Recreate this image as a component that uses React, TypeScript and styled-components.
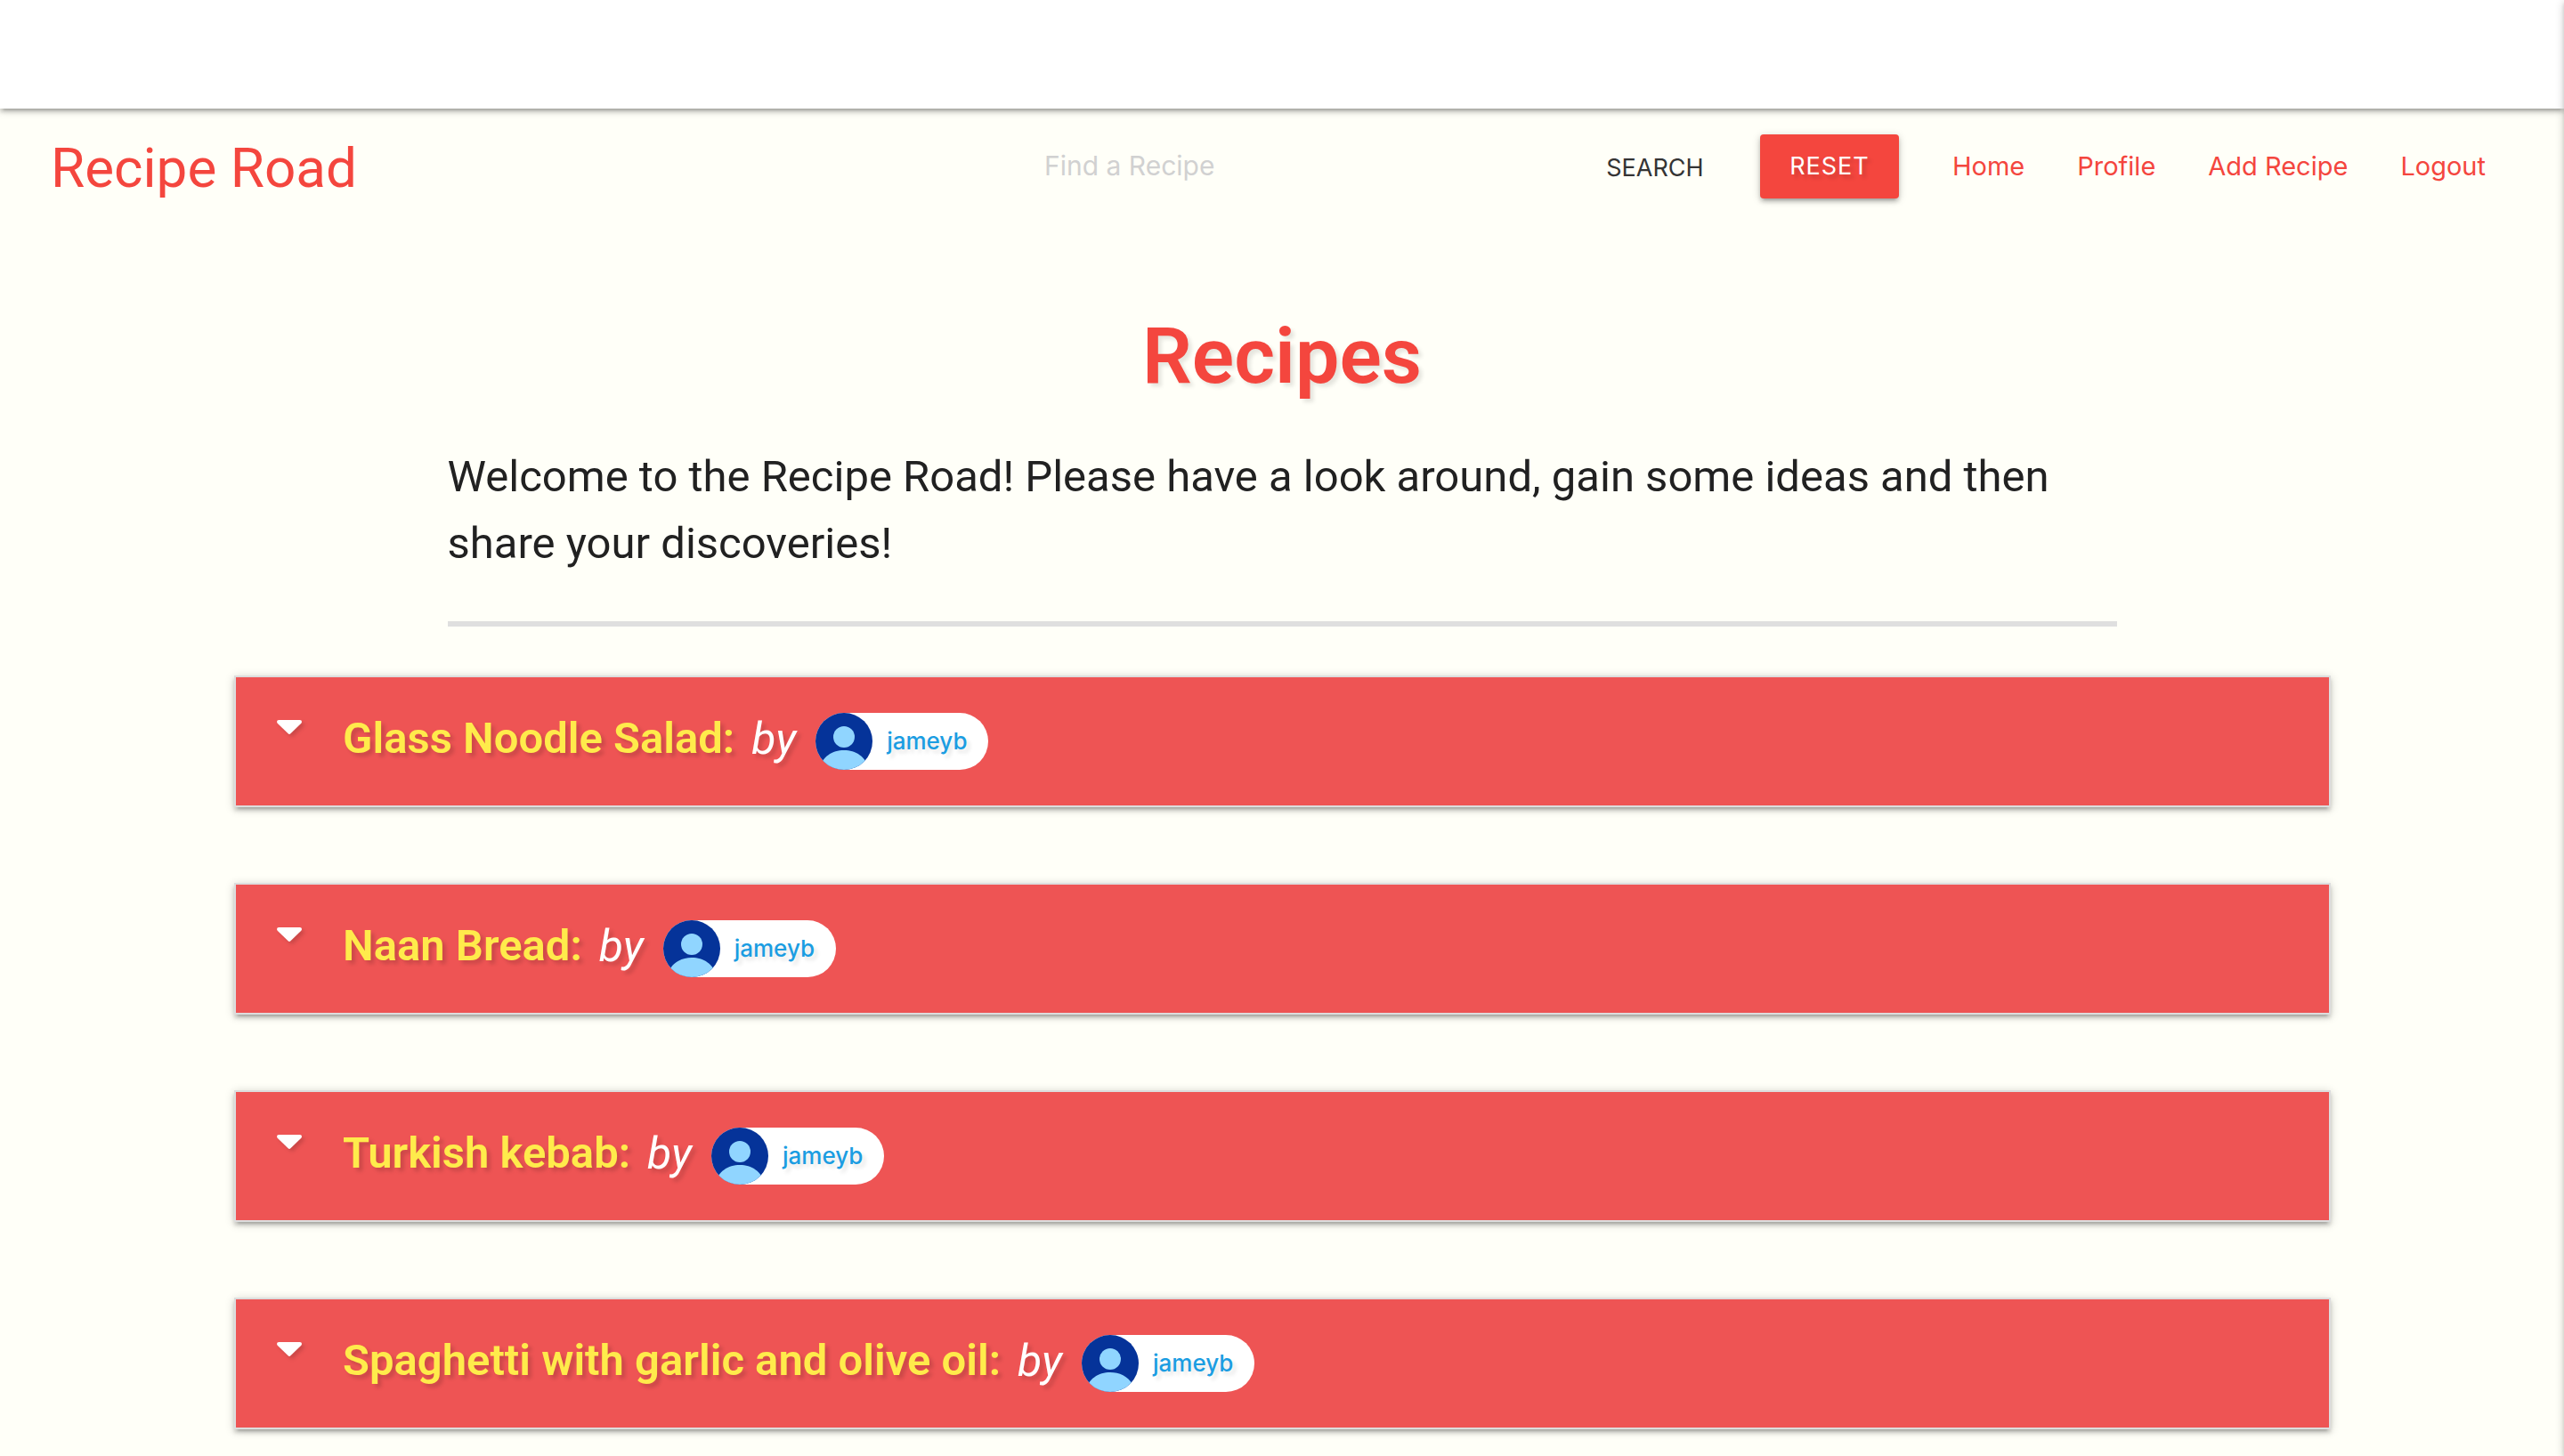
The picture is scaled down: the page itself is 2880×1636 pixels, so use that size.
import React from "react";
import styled, { createGlobalStyle } from "styled-components";

const red = "#f4463e";
const displayFont = 'Roboto, "Liberation Sans", sans-serif';
const depth =
  "0 4px 4px 0 rgba(0,0,0,0.14), 0 6px 2px -4px rgba(0,0,0,0.12), 0 2px 10px 0 rgba(0,0,0,0.2)";

const GlobalStyle = createGlobalStyle`
  *, *::before, *::after { box-sizing: border-box; }
  html { overflow-x: hidden; }
  body {
    margin: 0;
    background: #fffff8;
    color: #212121;
    font-family: Inter, "Liberation Sans", sans-serif;
    font-size: 30px;
    line-height: 44px;
  }
  a { color: inherit; text-decoration: none; }
  h1, h2, p, ul { margin: 0; padding: 0; }
  ul { list-style: none; }
`;

const Page = styled.div`
  overflow: hidden;
  min-height: 100vh;
`;

const TopBar = styled.div`
  height: 122px;
  background: #fff;
  box-shadow: ${depth};
`;

const Drawer = styled.aside`
  position: fixed;
  top: 0;
  bottom: 0;
  left: 100%;
  width: 600px;
  background: #fff;
  box-shadow: ${depth};
`;

const Nav = styled.nav`
  display: flex;
  align-items: center;
  height: 130px;
  padding: 0 88px 0 57px;
`;

const Brand = styled.a`
  padding-top: 4px;
  color: ${red};
  font-family: ${displayFont};
  font-size: 62px;
  line-height: 80px;
`;

const SearchForm = styled.form`
  display: flex;
  align-items: center;
  margin-left: auto;
`;

const SearchInput = styled.input`
  width: 600px;
  height: 60px;
  padding: 0 0 2px;
  border: 0;
  outline: 0;
  background: transparent;
  color: #212121;
  font: inherit;
  &::placeholder {
    color: #d1d1d1;
    opacity: 1;
  }
`;

const FlatButton = styled.button`
  width: 172px;
  height: 72px;
  padding: 4px 0 0;
  border: 0;
  background: transparent;
  color: #343434;
  font: inherit;
  font-size: 27px;
`;

const ResetButton = styled.button`
  width: 156px;
  height: 72px;
  margin: 0 60px 0 32px;
  padding: 0;
  border: 0;
  border-radius: 4px;
  background: ${red};
  color: #fff;
  font: inherit;
  font-size: 27px;
  letter-spacing: 1px;
  text-shadow: 4px 4px 4px rgba(0, 0, 0, 0.15);
  box-shadow: ${depth};
`;

const NavLinks = styled.ul`
  display: flex;
  gap: 59px;
  color: ${red};
  font-size: 29px;
`;

const Intro = styled.header`
  width: 1875px;
  max-width: 90%;
  margin: 0 auto;
  padding-top: 96px;
`;

const Title = styled.h1`
  color: ${red};
  font-family: ${displayFont};
  font-size: 88px;
  line-height: 104px;
  font-weight: 600;
  text-align: center;
  text-shadow: 4px 4px 4px rgba(0, 0, 0, 0.1);
`;

const Welcome = styled.p`
  margin-top: 46px;
  font-family: ${displayFont};
  font-size: 49px;
  line-height: 75px;
`;

const Rule = styled.hr`
  height: 6px;
  margin: 50px 0 55px;
  border: 0;
  background: #dfdfdf;
`;

const RecipeList = styled.ul`
  display: flex;
  flex-direction: column;
  gap: 85px;
  padding: 0 262px 85px 263px;
`;

const RecipeRow = styled.li`
  display: flex;
  align-items: flex-start;
  height: 148px;
  padding: 40px 46px;
  border: 2px solid #ddd;
  background: #ee5454;
  color: #fff;
  box-shadow: ${depth};
  text-shadow: 4px 4px 4px rgba(0, 0, 0, 0.15);
`;

const Toggle = styled.button`
  display: flex;
  width: 28px;
  height: 32px;
  margin-right: 46px;
  padding: 8px 0 0;
  border: 0;
  background: transparent;
  svg {
    overflow: visible;
    filter: drop-shadow(3px 3px 2px rgba(0, 0, 0, 0.15));
  }
`;

const RecipeName = styled.h2`
  color: #ffeb4b;
  font-family: ${displayFont};
  font-size: 49px;
  line-height: 58px;
  font-weight: 600;
`;

const By = styled.em`
  margin: 0 22px 0 19px;
  font-family: ${displayFont};
  font-size: 50px;
  line-height: 58px;
`;

const Chip = styled.a`
  display: flex;
  align-items: center;
  height: 64px;
  padding-right: 24px;
  gap: 16px;
  border-radius: 32px;
  background: #fff;
  color: #1b9de2;
  font-size: 26px;
  font-weight: 500;
  line-height: 64px;
  text-shadow: 4px 4px 4px rgba(0, 0, 0, 0.1);
`;

function Caret() {
  return (
    <svg width="28" height="16" viewBox="0 0 28 16" aria-hidden="true">
      <path
        d="M2.2 0H25.8Q28 0 28 2Q28 2.9 27.3 3.7L15.4 15.3Q14 16.6 12.6 15.3L.7 3.7Q0 2.9 0 2Q0 0 2.2 0Z"
        fill="#fff"
      />
    </svg>
  );
}

function Avatar() {
  return (
    <svg width="64" height="64" viewBox="0 0 64 64" aria-hidden="true">
      <clipPath id="avatar-clip">
        <circle cx="32" cy="32" r="32" />
      </clipPath>
      <g clipPath="url(#avatar-clip)">
        <rect width="64" height="64" fill="#053399" />
        <circle cx="32" cy="27" r="12" fill="#90d5ff" />
        <path d="M4 64C7 49 19 42 32 42S57 49 60 64Z" fill="#90d5ff" />
      </g>
    </svg>
  );
}

const links = ["Home", "Profile", "Add Recipe", "Logout"];

const recipes = [
  { name: "Glass Noodle Salad:", author: "jameyb" },
  { name: "Naan Bread:", author: "jameyb" },
  { name: "Turkish kebab:", author: "jameyb" },
  { name: "Spaghetti with garlic and olive oil:", author: "jameyb" },
];

export default function App() {
  return (
    <>
      <GlobalStyle />
      <Page>
        <TopBar />
        <Nav>
          <Brand href="#">Recipe Road</Brand>
          <SearchForm onSubmit={(e) => e.preventDefault()}>
            <SearchInput type="text" aria-label="Find a Recipe" placeholder="Find a Recipe" />
            <FlatButton type="submit">SEARCH</FlatButton>
            <ResetButton type="reset">RESET</ResetButton>
          </SearchForm>
          <NavLinks>
            {links.map((label) => (
              <li key={label}>
                <a href="#">{label}</a>
              </li>
            ))}
          </NavLinks>
        </Nav>
        <main>
          <Intro>
            <Title>Recipes</Title>
            <Welcome>
              Welcome to the Recipe Road! Please have a look around, gain some ideas and then share
              your discoveries!
            </Welcome>
            <Rule />
          </Intro>
          <RecipeList>
            {recipes.map(({ name, author }) => (
              <RecipeRow key={name}>
                <Toggle type="button" aria-label={`Show ${name}`}>
                  <Caret />
                </Toggle>
                <RecipeName>{name}</RecipeName>
                <By>by</By>
                <Chip href="#">
                  <Avatar />
                  {author}
                </Chip>
              </RecipeRow>
            ))}
          </RecipeList>
        </main>
      </Page>
      <Drawer aria-hidden="true" />
    </>
  );
}
